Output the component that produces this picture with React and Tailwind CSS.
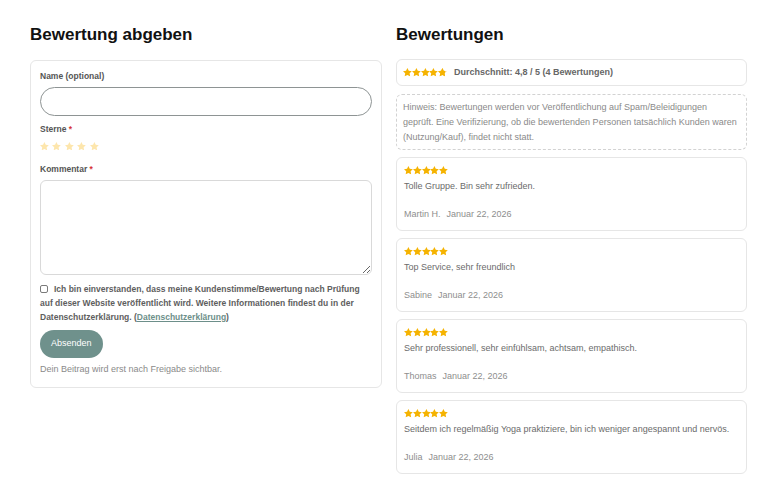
const REVIEWS = [
  { text: "Tolle Gruppe. Bin sehr zufrieden.", name: "Martin H.", date: "Januar 22, 2026" },
  { text: "Top Service, sehr freundlich", name: "Sabine", date: "Januar 22, 2026" },
  { text: "Sehr professionell, sehr einfühlsam, achtsam, empathisch.", name: "Thomas", date: "Januar 22, 2026" },
  {
    text: "Seitdem ich regelmäßig Yoga praktiziere, bin ich weniger angespannt und nervös.",
    name: "Julia",
    date: "Januar 22, 2026",
  },
];

function Star({ className }) {
  return (
    <svg viewBox="2 2 20 20" className={className} fill="currentColor">
      <polygon points="12,2 15.09,8.26 22,9.27 17,14.14 18.18,21.02 12,17.77 5.82,21.02 7,14.14 2,9.27 8.91,8.26" />
    </svg>
  );
}

function Stars({ partial }) {
  return (
    <div className="flex items-center text-[#f5b301]">
      {[0, 1, 2, 3].map((i) => (
        <Star key={i} className="w-[8.8px] h-[8.8px]" />
      ))}
      {partial ? (
        <span className="relative w-[8.8px] h-[8.8px]">
          <Star className="w-[8.8px] h-[8.8px] text-[#f8d27a]" />
          <span className="absolute left-0 top-0 h-full w-[80%] overflow-hidden">
            <Star className="w-[8.8px] h-[8.8px]" />
          </span>
        </span>
      ) : (
        <Star className="w-[8.8px] h-[8.8px]" />
      )}
    </div>
  );
}

export default function App() {
  return (
    <div className="min-h-[496px] bg-white font-['Liberation_Sans',Arial,sans-serif] flex items-start gap-[14px] pl-[30px]">
      {/* form */}
      <div className="w-[352px] shrink-0">
        <h2 className="mt-[25px] text-[17px] leading-[20px] font-bold text-[#111]">Bewertung abgeben</h2>
        <div className="mt-[15px] border border-[#e6e6e6] rounded-[6px] px-[9px] pt-[9px] pb-[11px]">
          <label className="block text-[8.5px] leading-[12px] font-bold text-[#555]">Name (optional)</label>
          <input
            type="text"
            className="mt-[5px] block w-full h-[29px] rounded-full border border-[#8e9494] px-3 outline-none"
          />
          <label className="mt-[7px] block text-[8.5px] leading-[12px] font-bold text-[#555]">
            Sterne <span className="text-[#d63638]">*</span>
          </label>
          <div className="mt-[6px] flex items-center gap-[3.7px] h-[10px] text-[#fde6ad]">
            {[0, 1, 2, 3, 4].map((i) => (
              <Star key={i} className="w-[8.8px] h-[8.8px]" />
            ))}
          </div>
          <label className="mt-[12px] block text-[8.5px] leading-[12px] font-bold text-[#555]">
            Kommentar <span className="text-[#d63638]">*</span>
          </label>
          <textarea className="mt-[5px] block w-full h-[95px] rounded-[6px] border border-[#d9d9d9] outline-none" />
          <p className="mt-[7px] text-[8.5px] leading-[14px] font-bold text-[#5e5e5e]">
            <span className="inline-block w-[8px] h-[8px] border border-[#7a7a7a] rounded-[2px] mr-[6px] align-[-1px]" />
            Ich bin einverstanden, dass meine Kundenstimme/Bewertung nach Prüfung auf dieser Website veröffentlicht
            wird. Weitere Informationen findest du in der Datenschutzerklärung. (<a className="underline text-[#6d8f8a]">Datenschutzerklärung</a>)
          </p>
          <button className="mt-[6px] h-[28px] px-[11px] rounded-full bg-[#6f918c] text-white text-[9px]">
            Absenden
          </button>
          <p className="mt-[4px] text-[9px] leading-[14px] text-[#8a8a8a]">
            Dein Beitrag wird erst nach Freigabe sichtbar.
          </p>
        </div>
      </div>

      {/* reviews */}
      <div className="w-[351px] shrink-0">
        <h2 className="mt-[25px] text-[17px] leading-[20px] font-bold text-[#111]">Bewertungen</h2>
        <div className="mt-[14px] flex flex-col gap-[7px]">
          <div className="mb-[1px] h-[27px] border border-[#e6e6e6] rounded-[6px] px-[6px] flex items-center gap-[7px]">
            <Stars partial />
            <span className="text-[9px] font-bold text-[#666]">Durchschnitt: 4,8 / 5 (4 Bewertungen)</span>
          </div>
          <div className="border border-dashed border-[#d2d2d2] rounded-[6px] px-[6px] pt-[5px] pb-[4px] text-[9px] leading-[15px] text-[#8a8a8a]">
            Hinweis: Bewertungen werden vor Veröffentlichung auf Spam/Beleidigungen geprüft. Eine Verifizierung, ob
            die bewertenden Personen tatsächlich Kunden waren (Nutzung/Kauf), findet nicht statt.
          </div>
          {REVIEWS.map((r) => (
            <div key={r.name} className="border border-[#e6e6e6] rounded-[6px] px-[7px] pt-[6px] pb-[9px]">
              <div className="h-[13px] flex items-center">
                <Stars />
              </div>
              <p className="mt-[2px] text-[9px] leading-[14px] text-[#6b6b6b]">{r.text}</p>
              <div className="mt-[14px] flex gap-[6px] text-[9px] leading-[14px] text-[#8e8e8e]">
                <span>{r.name}</span>
                <span>{r.date}</span>
              </div>
            </div>
          ))}
        </div>
      </div>
    </div>
  );
}
